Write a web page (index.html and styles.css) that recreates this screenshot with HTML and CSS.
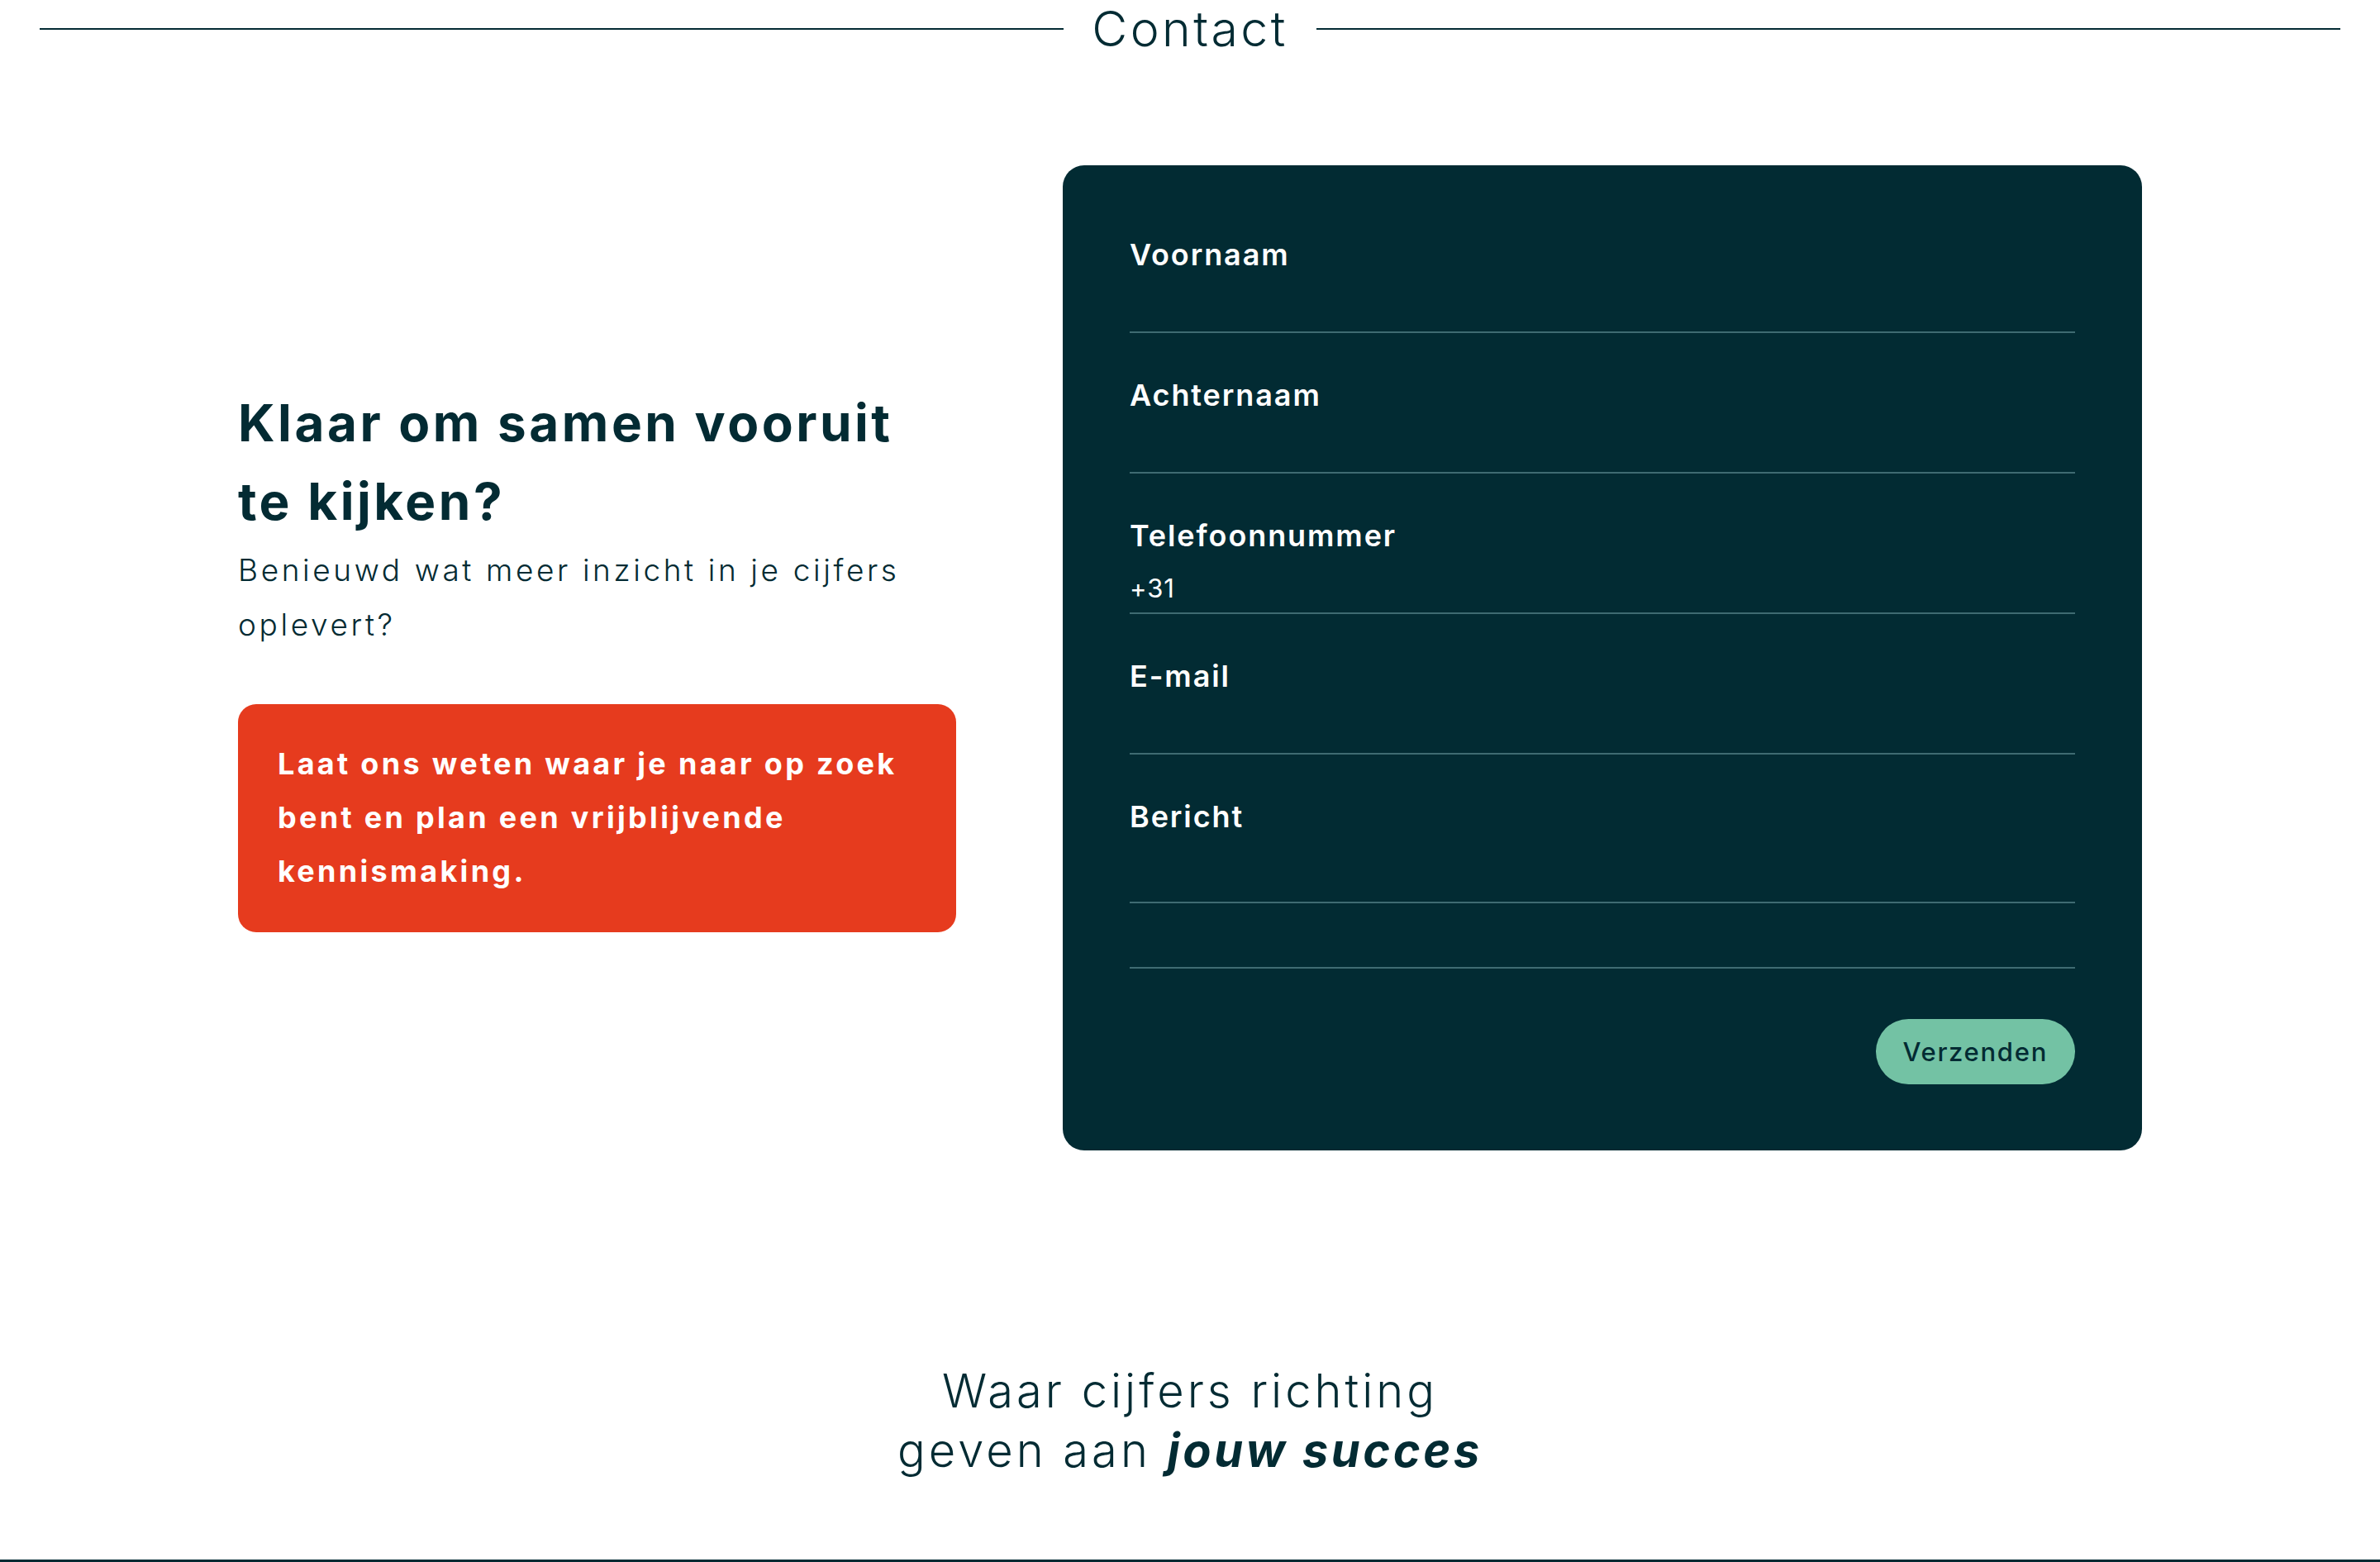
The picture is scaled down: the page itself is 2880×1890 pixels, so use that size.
FILE: index.html
```html
<!DOCTYPE html>
<html lang="nl">
<head>
<meta charset="utf-8">
<title>Contact</title>
<link rel="stylesheet" href="styles.css">
</head>
<body>
<header class="section-title">
  <span class="section-title__line"></span>
  <h1 class="section-title__text">Contact</h1>
  <span class="section-title__line"></span>
</header>

<main class="contact">
  <div class="contact__intro">
    <h2 class="contact__heading">Klaar om samen vooruit te kijken?</h2>
    <p class="contact__lead">Benieuwd wat meer inzicht in je cijfers oplevert?</p>
    <div class="contact__callout">Laat ons weten waar je naar op zoek bent en plan een vrijblijvende kennismaking.</div>
  </div>

  <form class="form-card">
    <div class="field">
      <label class="field__label" for="voornaam">Voornaam</label>
      <input class="field__input" id="voornaam" type="text">
    </div>
    <div class="field">
      <label class="field__label" for="achternaam">Achternaam</label>
      <input class="field__input" id="achternaam" type="text">
    </div>
    <div class="field">
      <label class="field__label" for="tel">Telefoonnummer</label>
      <input class="field__input" id="tel" type="tel" value="+31">
    </div>
    <div class="field">
      <label class="field__label" for="email">E-mail</label>
      <input class="field__input" id="email" type="email">
    </div>
    <div class="field">
      <label class="field__label" for="bericht">Bericht</label>
      <textarea class="field__input field__input--area" id="bericht"></textarea>
    </div>
    <div class="field field--extra"></div>
    <div class="form-card__actions">
      <button class="btn" type="button">Verzenden</button>
    </div>
  </form>
</main>

<section class="tagline">
  <p class="tagline__text">Waar cijfers richting<br>geven aan <strong class="tagline__em">jouw succes</strong></p>
</section>

<footer class="footer"></footer>
</body>
</html>
```

FILE: styles.css
```css
* { box-sizing: border-box; }

html, body {
  margin: 0;
  padding: 0;
  background: #ffffff;
}

body {
  font-family: Inter, "Noto Sans", "Liberation Sans", sans-serif;
  color: #032b33;
}

/* Section title with lines */
.section-title {
  display: flex;
  align-items: center;
  gap: 34px;
  margin: 0 48px;
  height: 70px;
}

.section-title__line {
  flex: 1;
  height: 2px;
  background: #032b33;
}

.section-title__text {
  margin: 0;
  font-size: 59px;
  line-height: 70px;
  font-weight: 300;
  letter-spacing: 3.4px;
}

/* Main contact block */
.contact {
  width: 2304px;
  margin: 130px auto 0;
  display: grid;
  grid-template-columns: 869px 1306px;
  justify-content: space-between;
  align-items: center;
}

.contact__heading {
  margin: 0;
  max-width: 850px;
  font-size: 62px;
  line-height: 95px;
  font-weight: 700;
  letter-spacing: 3.5px;
}

.contact__lead {
  margin: 3px 0 0;
  font-size: 37px;
  line-height: 66px;
  font-weight: 350;
  letter-spacing: 3.6px;
}

.contact__callout {
  margin-top: 63px;
  background: #e63b1e;
  color: #ffffff;
  border-radius: 22px;
  padding: 40px 40px 41px 48px;
  font-size: 36px;
  line-height: 65px;
  font-weight: 700;
  letter-spacing: 3.3px;
}

/* Form card */
.form-card {
  background: #022b33;
  border-radius: 26px;
  padding: 33px 81px 80px;
  display: flex;
  flex-direction: column;
}

.field {
  display: flex;
  flex-direction: column;
  padding-top: 53px;
  border-bottom: 2px solid #3f6b72;
}

.field__label {
  color: #ffffff;
  font-size: 36px;
  line-height: 44px;
  font-weight: 600;
  letter-spacing: 1.9px;
}

.field__input {
  display: block;
  width: 100%;
  height: 71px;
  padding: 21px 0 10px;
  margin: 0;
  border: 0;
  outline: none;
  background: transparent;
  color: #ffffff;
  font-family: Inter, "Noto Sans", "Liberation Sans", sans-serif;
  font-size: 31px;
  line-height: 40px;
  font-weight: 400;
  letter-spacing: 1px;
}

.field__input--area {
  height: 81px;
  resize: none;
}

.field--extra {
  padding-top: 0;
  height: 79px;
}

.form-card__actions {
  display: flex;
  justify-content: flex-end;
  margin-top: 61px;
}

.btn {
  height: 79px;
  padding: 0 33px;
  border: 0;
  border-radius: 40px;
  background: #73c2a4;
  color: #032b33;
  font-family: Inter, "Noto Sans", "Liberation Sans", sans-serif;
  font-size: 31px;
  font-weight: 500;
  letter-spacing: 1.7px;
}

/* Tagline */
.tagline {
  margin-top: 255px;
  text-align: center;
}

.tagline__text {
  margin: 0;
  font-size: 56px;
  line-height: 72px;
  font-weight: 300;
  letter-spacing: 4px;
}

.tagline__em {
  font-weight: 700;
  font-style: italic;
  letter-spacing: 3.6px;
}

.footer {
  margin-top: 96px;
  height: 300px;
  background: #032b33;
}
```
